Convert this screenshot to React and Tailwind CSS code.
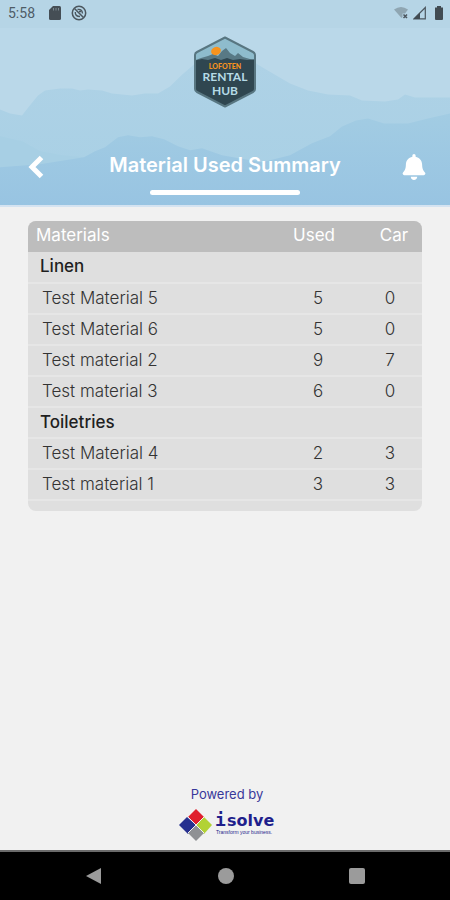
import { FaBell } from 'react-icons/fa';

const groups = [
    {
        name: 'Linen',
        items: [
            { name: 'Test Material 5', used: 5, car: 0 },
            { name: 'Test Material 6', used: 5, car: 0 },
            { name: 'Test material 2', used: 9, car: 7 },
            { name: 'Test material 3', used: 6, car: 0 },
        ],
    },
    {
        name: 'Toiletries',
        items: [
            { name: 'Test Material 4', used: 2, car: 3 },
            { name: 'Test material 1', used: 3, car: 3 },
        ],
    },
];

function Mountains() {
    return (
        <svg className="absolute inset-0 h-full w-full" viewBox="0 0 450 206" preserveAspectRatio="none" aria-hidden="true">
            <defs>
                <linearGradient id="far" x1="0" y1="0" x2="0" y2="1">
                    <stop offset="0" stopColor="#afd2e6" />
                    <stop offset="1" stopColor="#a8d0e5" />
                </linearGradient>
                <linearGradient id="near" x1="0" y1="0" x2="0" y2="1">
                    <stop offset="0" stopColor="#a2cce3" />
                    <stop offset="1" stopColor="#98c4e2" />
                </linearGradient>
            </defs>
            <path
                fill="url(#far)"
                d="M0 110L10 114L22 116L29 107L38 96L45 91L60 89L72 89L80 91L88 90L102 91L112 94L132 96L145 94L158 94L170 87L182 75L196 63L212 47L225 41L240 52L258 65L275 75L290 84L308 91L328 95L350 96L362 101L385 102L398 100L405 95L415 98L450 98V206H0Z"
            />
            <path fill="#a7cfe4" d="M0 137L22 142L40 152L62 156L84 158V206H0Z" />
            <path
                fill="url(#near)"
                d="M0 168L40 165L84 158L95 152L105 148L118 138L128 136L140 138L152 137L164 140L178 147L190 151L202 149L222 156L262 163L290 156L312 144L330 137L342 127L356 121L368 119L384 124L408 124L428 119L450 114V206H0Z"
            />
        </svg>
    );
}

function StatusBar() {
    return (
        <div className="relative flex h-7 items-center justify-between bg-[#b4d3e5]/60 pr-1.5 pb-0.5 pl-2 text-[#4e5c66]">
            <div className="flex items-center gap-3.5">
                <span className="font-[Roboto,sans-serif] text-sm">5:58</span>
                <div className="flex items-center gap-2.5">
                    <svg width="12" height="14" viewBox="0 0 12 14" fill="#454e55" aria-hidden="true">
                        <path d="M4 0H10.500Q12 0 12 1.500V12.500Q12 14 10.500 14H1.500Q0 14 0 12.500V4Z" />
                        <path d="M4.500 2V4.500M7 2V4.500M9.500 2V4.500" stroke="#7b8991" strokeWidth="1" />
                    </svg>
                    <svg width="16" height="16" viewBox="0 0 16 16" fill="none" stroke="#4b565e" aria-hidden="true">
                        <circle cx="8" cy="8" r="6.700" strokeWidth="1.500" />
                        <path d="M3.500 3.500L12.500 12.500" strokeWidth="1.500" />
                        <path d="M6.500 4.500Q11 3.500 11.500 8.500M4.300 7Q4 11.500 9 11.500M8 6.500H10" strokeWidth="1.400" />
                    </svg>
                </div>
            </div>
            <div className="flex items-center gap-1">
                <svg width="15" height="14" viewBox="0 0 15 14" aria-hidden="true">
                    <path fill="#8fa6b2" d="M0 3.500Q7 -1.500 14 3.500L11 7.500H8.500V11L7.500 12Z" />
                    <path stroke="#4b565e" strokeWidth="1.500" d="M9.500 8.500L13 12M13 8.500L9.500 12" />
                </svg>
                <svg width="13" height="14" viewBox="0 0 13 14" aria-hidden="true">
                    <path fill="none" stroke="#4b565e" strokeWidth="1.200" d="M1 12.800H12.300V1.500Z" />
                    <path fill="#414b52" d="M0.500 13L7 6.500V13Z" />
                </svg>
                <svg className="ml-1" width="10" height="14" viewBox="0 0 10 14" fill="#414b52" aria-hidden="true">
                    <path d="M3 0H7V1.500H9V13Q9 14 8 14H2Q1 14 1 13V1.500H3Z" />
                </svg>
            </div>
        </div>
    );
}

function RentalHubLogo() {
    return (
        <svg className="relative mx-auto mt-2" width="64" height="72" viewBox="0 0 64 72" role="img" aria-label="Lofoten Rental Hub">
            <defs>
                <clipPath id="badge">
                    <path d="M32 2L61 17Q62 18 62 20V52Q62 54 61 55L32 70L3 55Q2 54 2 52V20Q2 18 3 17Z" />
                </clipPath>
            </defs>
            <g clipPath="url(#badge)">
                <rect width="64" height="72" fill="#8ebccd" />
                <path fill="#587985" d="M0 25L8 22L15 20L20 18L25 20L29 15L33 12L37 17L42 20L45 17L50 21L64 25V32H0Z" />
                <ellipse cx="23" cy="15" rx="5" ry="4" fill="#f7931e" transform="rotate(-20 23 15)" />
                <path fill="#2f4650" d="M0 25L9 23L15 24L22 22L28 24L34 22L40 24L47 23L54 24L64 23V72H0Z" />
            </g>
            <path
                fill="none"
                stroke="#587681"
                strokeWidth="2"
                strokeLinejoin="round"
                d="M32 1.500L60 16Q62 17 62 19V53Q62 55 60 56L32 70.500L4 56Q2 55 2 53V19Q2 17 4 16Z"
            />
            <g textAnchor="middle" fontFamily="Lato, sans-serif">
                <text x="32" y="33" fontSize="7" fontWeight="900" fill="#f7931e">LOFOTEN</text>
                <text x="32" y="45" fontSize="12" fontWeight="700" fill="#b5dae6">RENTAL</text>
                <text x="32" y="59" fontSize="12" fontWeight="700" fill="#b5dae6">HUB</text>
            </g>
        </svg>
    );
}

function MaterialRow({ item }) {
    return (
        <tr className="h-[31px] border-b-2 border-[#e6e6e6] font-light text-[#333333]">
            <td className="pb-0.5 pl-3.5">{item.name}</td>
            <td className="pb-0.5 text-center">{item.used}</td>
            <td className="pb-0.5 text-center">{item.car}</td>
        </tr>
    );
}

function MaterialTable() {
    return (
        <div className="overflow-hidden rounded-lg bg-[#dfdfdf] pb-2.5">
            <table className="w-full table-fixed border-collapse text-[17px] leading-5">
                <colgroup>
                    <col />
                    <col className="w-20" />
                    <col className="w-16" />
                </colgroup>
                <thead>
                    <tr className="h-[31px] bg-[#bdbdbd] text-white">
                        <th className="pb-1 pl-2 text-left font-normal">Materials</th>
                        <th className="pr-2 pb-1 text-center font-normal">Used</th>
                        <th className="pb-1 pl-2 text-center font-normal">Car</th>
                    </tr>
                </thead>
                {groups.map((group) => (
                    <tbody key={group.name}>
                        <tr className="h-[31px] border-b-2 border-[#e6e6e6] text-[#1f1f1f]">
                            <th colSpan={3} scope="rowgroup" className="pb-0.5 pl-3 text-left font-medium">
                                {group.name}
                            </th>
                        </tr>
                        {group.items.map((item) => (
                            <MaterialRow key={item.name} item={item} />
                        ))}
                    </tbody>
                ))}
            </table>
        </div>
    );
}

function IsolveLogo() {
    return (
        <svg width="96" height="34" viewBox="0 0 96 34" role="img" aria-label="isolve, Transform your business.">
            <path fill="#e01f2d" d="M17 1L25 9L17 17L9 9Z" />
            <path fill="#27308f" d="M8 9L17 17L9 26L0 17Z" />
            <path fill="#b2d235" d="M25 9L33 17L25 26L17 17Z" />
            <path fill="#8f9194" d="M17 17L25 25L17 33L9 25Z" />
            <path stroke="#f1f1f1" strokeWidth="1" d="M9 9L25 25M25 9L9 25" />
            <g fill="#1f1f8c">
                <text x="36" y="18" fontFamily="'DejaVu Sans Mono', monospace" fontSize="18" fontWeight="700">i</text>
                <text x="48" y="18" fontFamily="'DejaVu Sans', sans-serif" fontSize="16" fontWeight="700">solve</text>
                <text x="37" y="26" fontFamily="'Liberation Sans', sans-serif" fontSize="5" fontWeight="400">Transform your business.</text>
            </g>
        </svg>
    );
}

export default function App() {
    return (
        <div className="flex min-h-screen flex-col bg-[#f1f1f1] font-[Inter,sans-serif]">
            <header className="relative border-b-2 border-[#d4e3f1] bg-[#bad8e9]">
                <Mountains />
                <StatusBar />
                <RentalHubLogo />
                <div className="relative mt-[42px] flex items-center justify-between px-6">
                    <button type="button" aria-label="Back" className="flex w-6 justify-center pt-1 text-white">
                        <svg width="16" height="24" viewBox="0 0 16 24" fill="none" stroke="currentColor" strokeWidth="5" aria-hidden="true">
                            <path d="M13.500 2.500L4 12L13.500 21.500" />
                        </svg>
                    </button>
                    <h1 className="text-xl leading-7 font-semibold text-white">Material Used Summary</h1>
                    <button type="button" aria-label="Notifications" className="flex w-6 justify-center pt-1 text-white">
                        <FaBell size={26} />
                    </button>
                </div>
                <div className="relative mx-auto mt-2.5 mb-2.5 h-[5px] w-1/3 rounded-full bg-white" />
            </header>

            <main className="flex-1 px-7 pt-3.5">
                <MaterialTable />
            </main>

            <footer className="flex flex-col items-center gap-1 pb-2 pl-1 text-[13px] leading-5 text-[#38389a]">
                <p>Powered by</p>
                <IsolveLogo />
            </footer>

            <nav className="flex h-[50px] items-center justify-around border-t-2 border-[#6b6b6b] bg-black px-7">
                <button type="button" aria-label="Back">
                    <svg width="18" height="18" viewBox="0 0 18 18" fill="#9b9b9b">
                        <path d="M1 9L16 1V17Z" />
                    </svg>
                </button>
                <button type="button" aria-label="Home" className="size-4 rounded-full bg-[#9b9b9b]" />
                <button type="button" aria-label="Recent apps" className="size-4 rounded-xs bg-[#9b9b9b]" />
            </nav>
        </div>
    );
}
